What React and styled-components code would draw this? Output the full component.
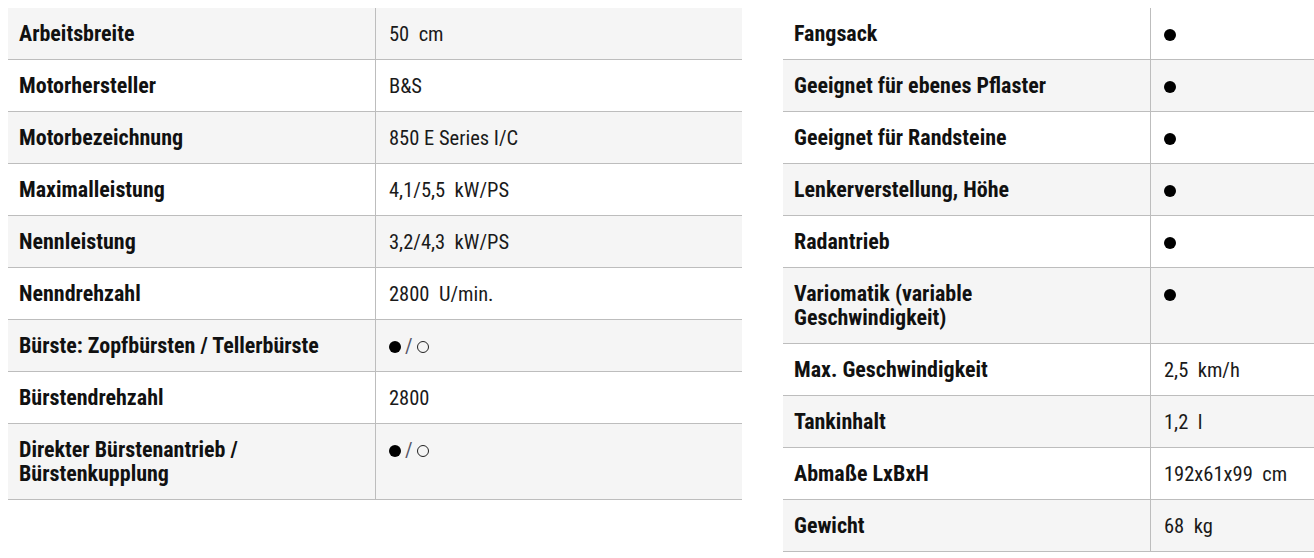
import React from "react";
import styled, {createGlobalStyle} from "styled-components";

const GlobalStyle = createGlobalStyle`
  html, body {
    margin: 0;
    padding: 0;
    background: #fff;
    overflow: hidden;
  }
  body {
    font-family: "Roboto Condensed", Roboto, "Liberation Sans", sans-serif;
    font-stretch: condensed;
  }
`;

const Page = styled.div`
  display: grid;
  grid-template-columns: 734px 1fr;
  column-gap: 41px;
  align-items: start;
  padding: 8px 0 0 8px;
`;

const Table = styled.div`
  display: flex;
  flex-direction: column;
`;

const Row = styled.div`
  display: grid;
  grid-template-columns: 368px 1fr;
  background: ${props => (props.$shaded ? "#f5f5f5" : "#fff")};
  border-bottom: 1px solid #bdbdbd;
`;

const Label = styled.div`
  padding: 14px 12px 13px 11px;
  font-size: 22px;
  line-height: 24px;
  font-weight: 700;
  color: #111;
  border-right: 1px solid #bdbdbd;
`;

const Value = styled.div`
  padding: 14px 12px 13px 13px;
  font-size: 20.5px;
  line-height: 24px;
  font-weight: 400;
  color: #1a1a1a;
  white-space: pre-wrap;
`;

const Dot = styled.span`
  display: inline-block;
  width: 12px;
  height: 12px;
  border-radius: 50%;
  box-sizing: border-box;
  vertical-align: 0;
  background: ${props => (props.$empty ? "transparent" : "#000")};
  border: ${props => (props.$empty ? "1px solid #222" : "none")};
`;

const Slash = styled.span`
  color: #556;
  margin: 0 4px;
`;

const Full = () => <Dot />;
const Either = () => (
  <>
    <Dot />
    <Slash>/</Slash>
    <Dot $empty />
  </>
);

const left = [
  ["Arbeitsbreite", "50  cm"],
  ["Motorhersteller", "B&S"],
  ["Motorbezeichnung", "850 E Series I/C"],
  ["Maximalleistung", "4,1/5,5  kW/PS"],
  ["Nennleistung", "3,2/4,3  kW/PS"],
  ["Nenndrehzahl", "2800  U/min."],
  ["Bürste: Zopfbürsten / Tellerbürste", <Either />],
  ["Bürstendrehzahl", "2800"],
  [<>Direkter Bürstenantrieb /<br />Bürstenkupplung</>, <Either />],
];

const right = [
  ["Fangsack", <Full />],
  ["Geeignet für ebenes Pflaster", <Full />],
  ["Geeignet für Randsteine", <Full />],
  ["Lenkerverstellung, Höhe", <Full />],
  ["Radantrieb", <Full />],
  [<>Variomatik (variable<br />Geschwindigkeit)</>, <Full />],
  ["Max. Geschwindigkeit", "2,5  km/h"],
  ["Tankinhalt", "1,2  l"],
  ["Abmaße LxBxH", "192x61x99  cm"],
  ["Gewicht", "68  kg"],
];

function SpecTable({rows, startShaded}) {
  return (
    <Table>
      {rows.map(([label, value], i) => (
        <Row key={i} $shaded={(i % 2 === 0) === startShaded}>
          <Label>{label}</Label>
          <Value>{value}</Value>
        </Row>
      ))}
    </Table>
  );
}

export default function App() {
  return (
    <>
      <GlobalStyle />
      <Page>
        <SpecTable rows={left} startShaded={true} />
        <SpecTable rows={right} startShaded={false} />
      </Page>
    </>
  );
}
